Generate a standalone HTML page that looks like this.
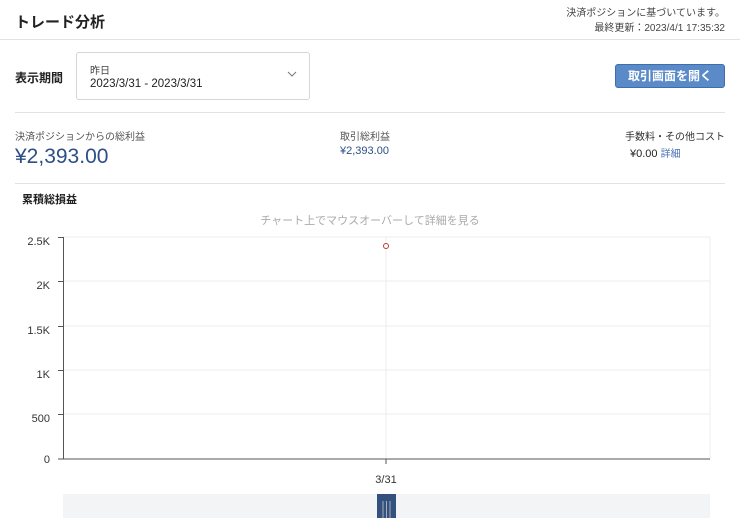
<!DOCTYPE html>
<html><head><meta charset="utf-8"><style>
*{margin:0;padding:0;box-sizing:border-box}
body{width:740px;height:518px;overflow:hidden;background:#fff;font-family:"Liberation Sans","Noto Sans CJK JP",sans-serif;color:#222;position:relative}
.a{position:absolute;white-space:nowrap}
</style></head><body>
<div class="a" style="left:15px;top:11px;font-size:15px;font-weight:bold;color:#222">トレード分析</div>
<div class="a" style="right:15px;top:6px;font-size:10px;color:#444;text-align:right;line-height:15px">決済ポジションに基づいています。<br>最終更新：2023/4/1 17:35:32</div>
<div class="a" style="left:0;top:39px;width:740px;height:1px;background:#e2e2e2"></div>
<div class="a" style="left:15px;top:69px;font-size:12px;font-weight:bold">表示期間</div>
<div class="a" style="left:76px;top:52px;width:234px;height:48px;border:1px solid #d6d6d6;border-radius:3px"></div>
<div class="a" style="left:90px;top:62px;font-size:10px;color:#444">昨日</div>
<div class="a" style="left:90px;top:78px;font-size:11.5px;color:#222">2023/3/31 - 2023/3/31</div>
<svg class="a" style="left:287px;top:71px" width="10" height="7"><path d="M1 1L5 5L9 1" stroke="#777" fill="none"/></svg>
<div class="a" style="left:615px;top:64px;width:110px;height:24px;background:#5b8ac9;border:1px solid #3f6eae;border-radius:3px;color:#fff;font-size:12px;font-weight:bold;text-align:center;line-height:22px">取引画面を開く</div>
<div class="a" style="left:15px;top:112px;width:710px;height:1px;background:#e2e2e2"></div>
<div class="a" style="left:15px;top:128px;font-size:10px;color:#555">決済ポジションからの総利益</div>
<div class="a" style="left:15px;top:145px;font-size:21px;color:#2d4f86">¥2,393.00</div>
<div class="a" style="left:340px;top:128px;font-size:10px;color:#555">取引総利益</div>
<div class="a" style="left:340px;top:145px;font-size:11px;color:#2d4f86">¥2,393.00</div>
<div class="a" style="right:15px;top:128px;font-size:10px;color:#333">手数料・その他コスト</div>
<div class="a" style="left:630px;top:145px;font-size:11px;color:#222">¥0.00 <span style="font-size:10px;color:#4a72b5">詳細</span></div>
<div class="a" style="left:15px;top:183px;width:710px;height:1px;background:#e2e2e2"></div>
<div class="a" style="left:22px;top:191px;font-size:11px;font-weight:bold">累積総損益</div>
<div class="a" style="left:0;top:212px;width:740px;text-align:center;font-size:11px;color:#aaa">チャート上でマウスオーバーして詳細を見る</div>
<svg class="a" style="left:0;top:230px" width="740" height="288" font-family="Liberation Sans, sans-serif" font-size="11" fill="#333">
<g stroke="#eee"><line x1="63" y1="7" x2="710" y2="7"/><line x1="63" y1="51" x2="710" y2="51"/><line x1="63" y1="96" x2="710" y2="96"/><line x1="63" y1="140" x2="710" y2="140"/><line x1="63" y1="184" x2="710" y2="184"/><line x1="386" y1="7" x2="386" y2="229"/><line x1="710" y1="7" x2="710" y2="229"/></g>
<g stroke="#555"><line x1="63.5" y1="7" x2="63.5" y2="229"/><line x1="63" y1="229" x2="710" y2="229"/><line x1="58" y1="7.5" x2="63" y2="7.5"/><line x1="58" y1="51.5" x2="63" y2="51.5"/><line x1="58" y1="96.5" x2="63" y2="96.5"/><line x1="58" y1="140.5" x2="63" y2="140.5"/><line x1="58" y1="184.5" x2="63" y2="184.5"/><line x1="58" y1="229" x2="63" y2="229"/><line x1="386" y1="229" x2="386" y2="234"/></g>
<g text-anchor="end"><text x="50" y="15">2.5K</text><text x="50" y="59">2K</text><text x="50" y="104">1.5K</text><text x="50" y="148">1K</text><text x="50" y="192">500</text><text x="50" y="233">0</text></g>
<text x="386" y="253" text-anchor="middle">3/31</text>
<circle cx="386" cy="16" r="2.5" fill="#fff" stroke="#c33"/>
<rect x="63" y="264" width="647" height="24" fill="#f2f4f6"/>
<rect x="377" y="264" width="19" height="24" fill="#34507d"/>
<g stroke="#aab"><line x1="383" y1="271" x2="383" y2="288"/><line x1="386.5" y1="271" x2="386.5" y2="288"/><line x1="390" y1="271" x2="390" y2="288"/></g>
</svg>
</body></html>
